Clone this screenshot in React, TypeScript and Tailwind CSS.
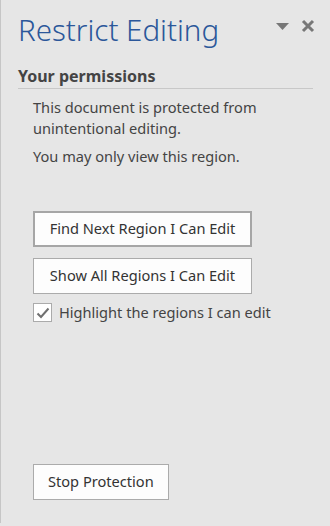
import React, { useState } from 'react';

// Restrict Editing task pane (Word-style)
const FONT = { fontFamily: '"Noto Sans", "Open Sans", "Liberation Sans", sans-serif' };

function PaneButton({ label, focused = false, wide = false }: { label: string; focused?: boolean; wide?: boolean }) {
  return (
    <button
      className={`h-[36px] px-[14px] bg-[#fdfdfd] text-[14.6px] text-[#333333] ${wide ? 'w-[219px]' : ''} ${
        focused ? 'border-2 border-[#a6a6a6]' : 'border border-[#ababab]'
      }`}
    >
      {label}
    </button>
  );
}

export default function App() {
  const [highlight, setHighlight] = useState(true);

  return (
    <div className="w-[330px] h-[526px] bg-[#e6e6e6] flex" style={FONT}>
      {/* left edge of the pane */}
      <div className="w-px h-[523px] bg-[#c6c6c6]" />

      <div className="flex-1 flex flex-col pl-[17px] pr-[17px]">
        {/* Header */}
        <div className="flex items-start justify-between h-[56px]">
          <h1 className="text-[29.5px] font-light text-[#2b579a] leading-none mt-[15px] whitespace-nowrap">
            Restrict Editing
          </h1>
          <div className="flex items-center gap-[12px] mt-[19px] mr-[-2px]">
            <svg width="13" height="7" viewBox="0 0 13 7">
              <path d="M0 0 H13 L6.5 7 Z" fill="#777777" />
            </svg>
            <svg width="14" height="14" viewBox="0 0 14 14">
              <path d="M2 2 L12 12 M12 2 L2 12" stroke="#777777" strokeWidth="3" />
            </svg>
          </div>
        </div>

        {/* Section */}
        <div className="text-[16px] font-bold text-[#444444] leading-[20px] mt-[10px]">
          Your permissions
        </div>
        <div className="h-px bg-[#c8c8c8] mt-[2px]" />

        <div className="pl-[15px] text-[14.6px] text-[#444444] leading-[21px] mt-[8px]">
          <p>This document is protected from</p>
          <p>unintentional editing.</p>
          <p className="mt-[7px]">You may only view this region.</p>
        </div>

        <div className="pl-[15px] flex flex-col items-start mt-[44px]">
          <div className="flex flex-col gap-[11px]">
            <PaneButton label="Find Next Region I Can Edit" focused wide />
            <PaneButton label="Show All Regions I Can Edit" wide />
          </div>

          <label className="flex items-center gap-[7px] mt-[8px] cursor-pointer">
            <span
              onClick={() => setHighlight(!highlight)}
              className="w-[19px] h-[19px] bg-white border border-[#ababab] flex items-center justify-center"
            >
              {highlight && (
                <svg width="14" height="12" viewBox="0 0 14 12">
                  <path d="M1.5 6.5 L5 10 L12.5 1.5" fill="none" stroke="#707070" strokeWidth="2" />
                </svg>
              )}
            </span>
            <span className="text-[14.6px] text-[#444444]">Highlight the regions I can edit</span>
          </label>
        </div>

        <div className="flex-1" />

        <div className="pl-[15px] mb-[26px]">
          <PaneButton label="Stop Protection" />
        </div>
      </div>
    </div>
  );
}
